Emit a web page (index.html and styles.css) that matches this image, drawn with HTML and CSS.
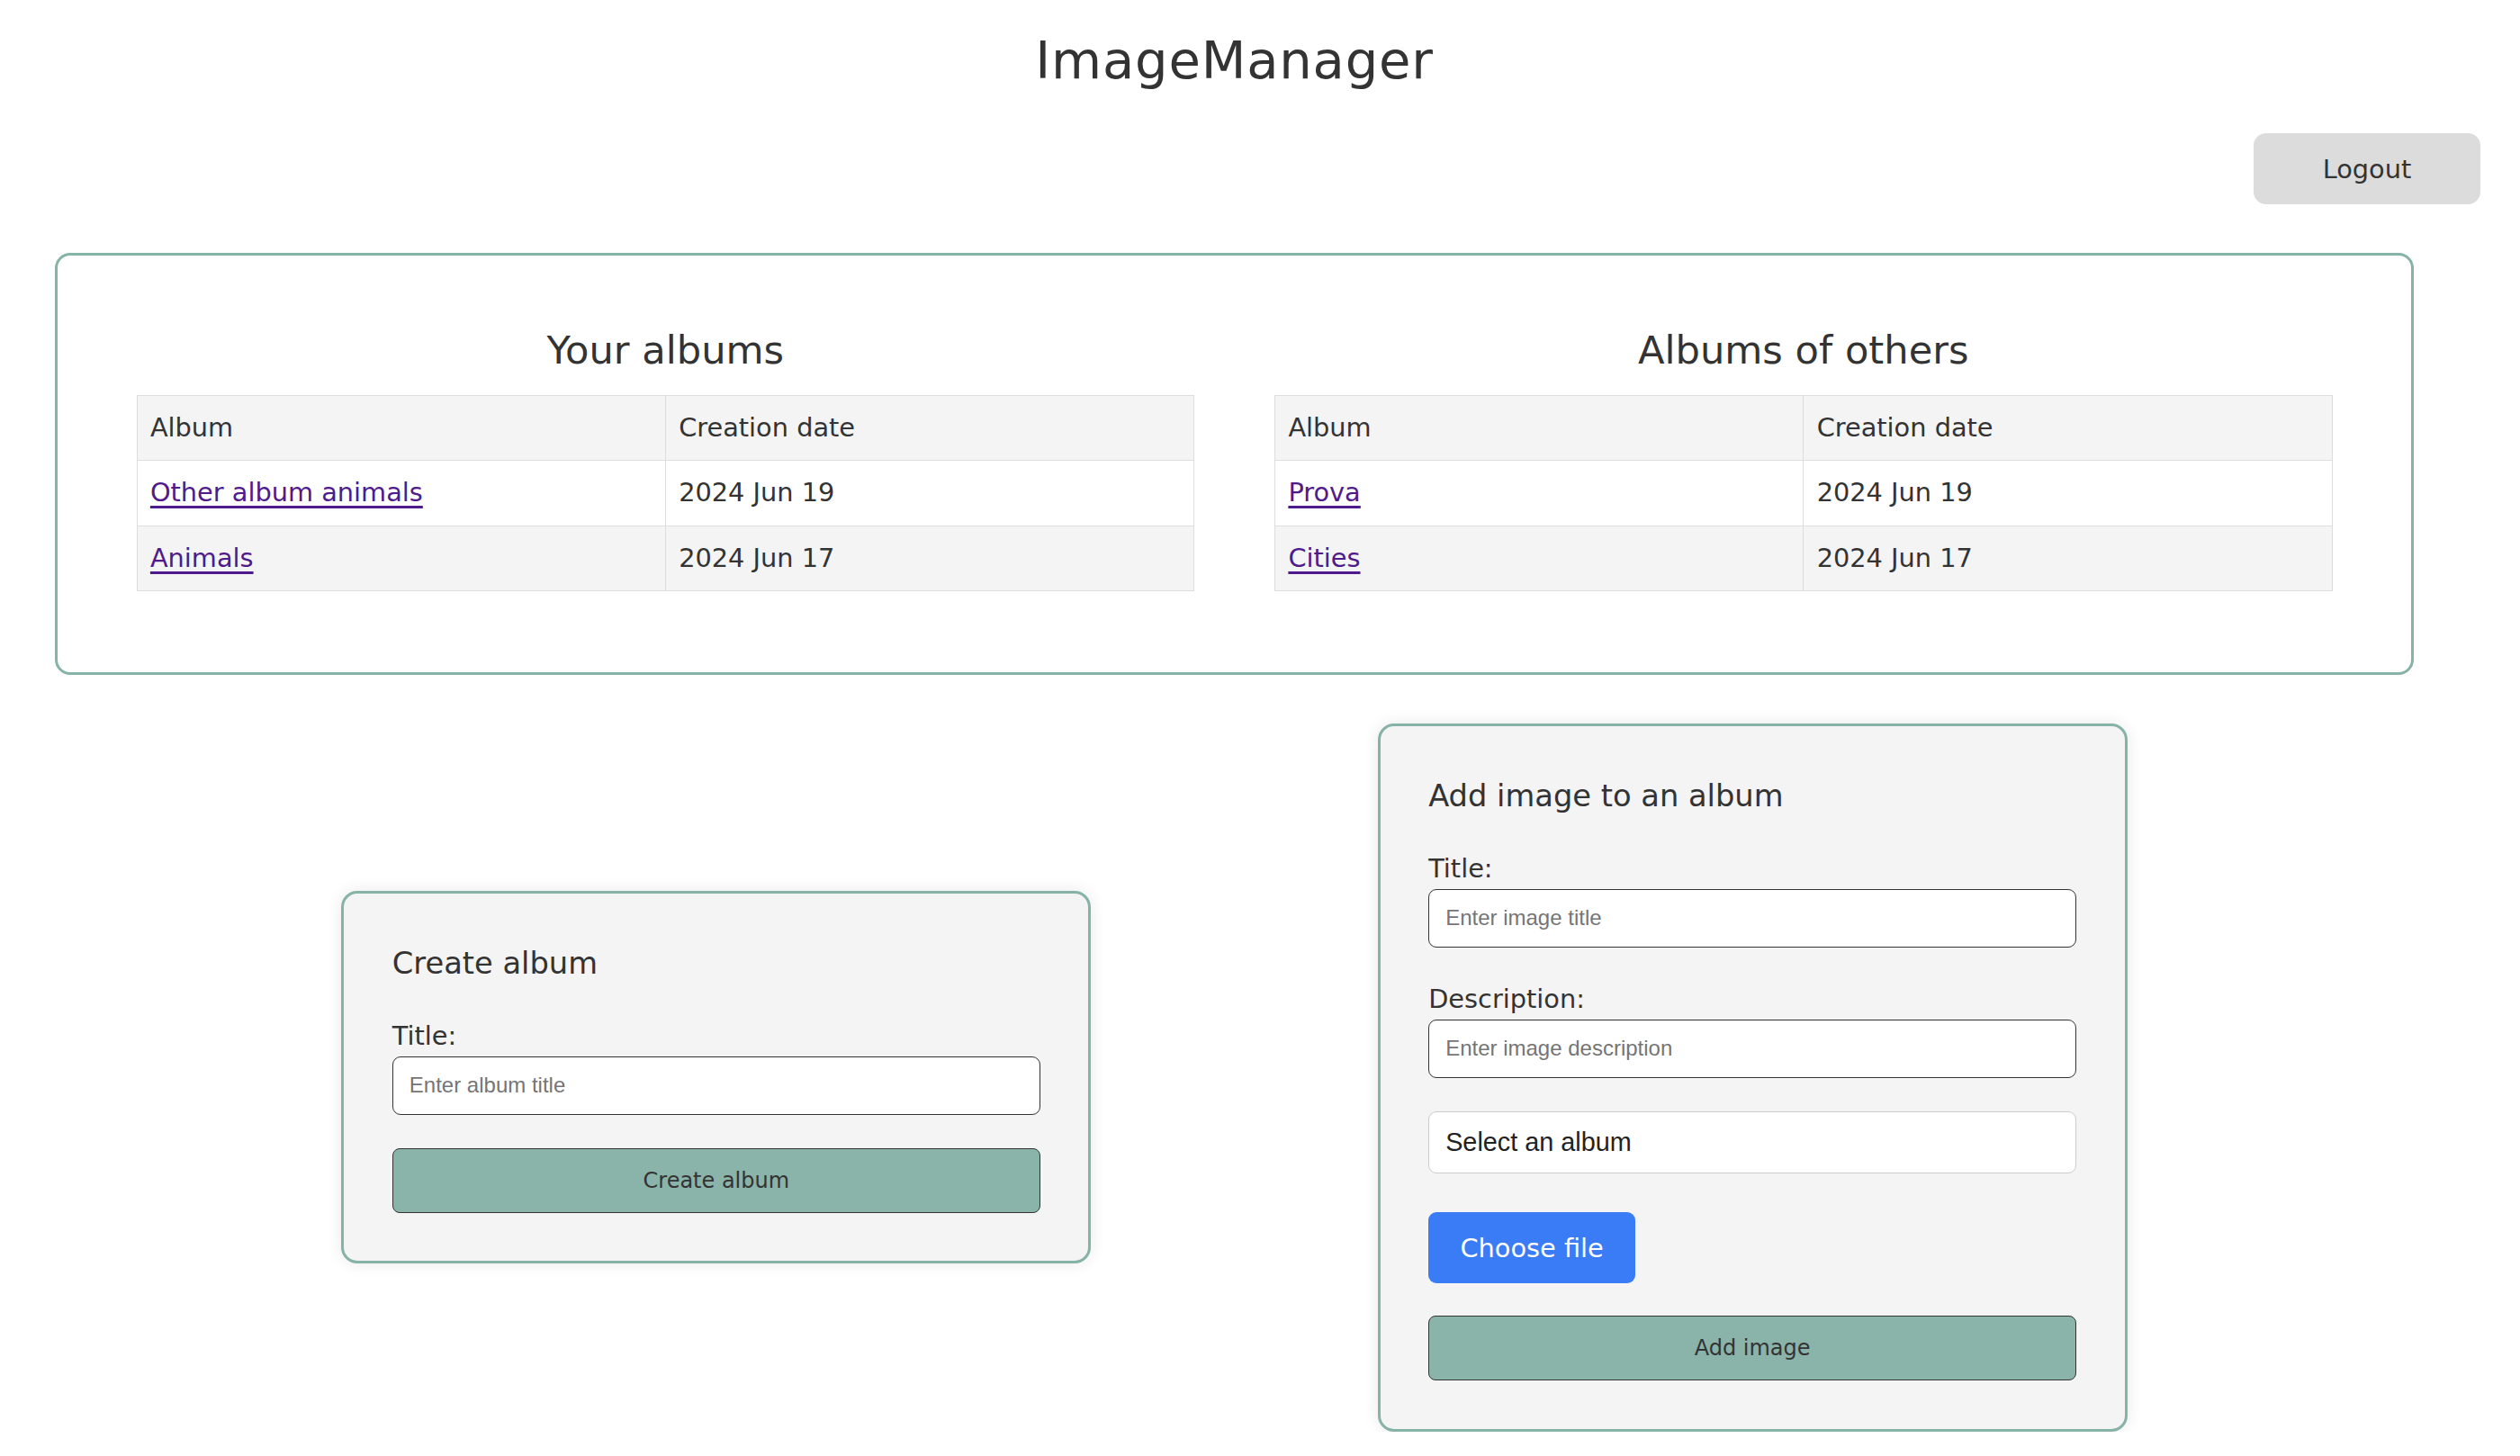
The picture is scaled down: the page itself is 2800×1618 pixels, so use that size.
FILE: index.html
```html
<!DOCTYPE html>
<html lang="en">
<head>
<meta charset="utf-8">
<title>ImageManager</title>
<link rel="stylesheet" href="styles.css">
</head>
<body>
<header class="site-header">
  <h1 class="site-title">ImageManager</h1>
</header>
<div class="toolbar">
  <button class="logout-btn" type="button">Logout</button>
</div>
<main>
  <section class="albums-panel">
    <div class="album-list">
      <h2 class="album-list-title">Your albums</h2>
      <table class="album-table">
        <thead>
          <tr><th>Album</th><th>Creation date</th></tr>
        </thead>
        <tbody>
          <tr><td><a href="#">Other album animals</a></td><td>2024 Jun 19</td></tr>
          <tr><td><a href="#">Animals</a></td><td>2024 Jun 17</td></tr>
        </tbody>
      </table>
    </div>
    <div class="album-list">
      <h2 class="album-list-title">Albums of others</h2>
      <table class="album-table">
        <thead>
          <tr><th>Album</th><th>Creation date</th></tr>
        </thead>
        <tbody>
          <tr><td><a href="#">Prova</a></td><td>2024 Jun 19</td></tr>
          <tr><td><a href="#">Cities</a></td><td>2024 Jun 17</td></tr>
        </tbody>
      </table>
    </div>
  </section>

  <section class="forms-row">
    <form class="card">
      <h3 class="card-title">Create album</h3>
      <label class="field-label" for="album-title">Title:</label>
      <input class="text-input" id="album-title" type="text" placeholder="Enter album title">
      <button class="submit-btn submit-btn--create" type="button">Create album</button>
    </form>

    <form class="card">
      <h3 class="card-title">Add image to an album</h3>
      <label class="field-label" for="image-title">Title:</label>
      <input class="text-input" id="image-title" type="text" placeholder="Enter image title">
      <label class="field-label field-label--spaced" for="image-desc">Description:</label>
      <input class="text-input" id="image-desc" type="text" placeholder="Enter image description">
      <select class="album-select">
        <option>Select an album</option>
      </select>
      <label class="file-btn" for="image-file">Choose file</label>
      <input class="file-input" id="image-file" type="file">
      <button class="submit-btn submit-btn--add" type="button">Add image</button>
    </form>
  </section>
</main>
</body>
</html>
```

FILE: styles.css
```css
* {
  box-sizing: border-box;
}

html {
  overflow: hidden;
}

body {
  margin: 0;
  background: #ffffff;
  color: #333333;
  font-family: "DejaVu Sans", "Noto Sans", sans-serif;
  font-size: 28.8px;
}

.site-header {
  padding: 34px 118px 0 61px;
}

.site-title {
  margin: 0;
  text-align: center;
  font-size: 57.6px;
  font-weight: 400;
  letter-spacing: 0.8px;
  line-height: normal;
  color: #333333;
}

.toolbar {
  display: flex;
  justify-content: flex-end;
  margin-top: 47px;
  padding-right: 44px;
}

.logout-btn {
  width: 252px;
  height: 79px;
  border: none;
  border-radius: 14px;
  background: #dcdcdc;
  color: #333333;
  font-family: inherit;
  font-size: 28.8px;
  cursor: pointer;
}

.albums-panel {
  display: grid;
  grid-template-columns: 1fr 1fr;
  column-gap: 89px;
  width: 2621px;
  margin: 54px 0 0 61px;
  padding: 79.5px 87.5px 89.5px;
  border: 3.5px solid #86b2a7;
  border-radius: 17px;
}

.album-list-title {
  margin: 0 0 25px;
  text-align: center;
  font-size: 43.2px;
  font-weight: 400;
  line-height: normal;
}

.album-table {
  width: 100%;
  table-layout: fixed;
  border-collapse: collapse;
  border: 1px solid #dddddd;
}

.album-table th,
.album-table td {
  padding: 19px 14.4px;
  border: 1px solid #dddddd;
  text-align: left;
  font-weight: 400;
  line-height: 33.5px;
}

.album-table thead tr {
  background: #f4f4f4;
}

.album-table tbody tr:nth-child(even) {
  background: #f4f4f4;
}

.album-table a {
  color: #4f1a8b;
  text-decoration-thickness: 2.5px;
  text-underline-offset: 5px;
}

.forms-row {
  display: flex;
  justify-content: space-evenly;
  align-items: center;
  width: 2621px;
  margin: 54px 0 0 61px;
}

.card {
  display: flex;
  flex-direction: column;
  width: 833px;
  padding: 53.5px;
  border: 3.5px solid #86b2a7;
  border-radius: 18px;
  background: #f4f4f4;
  box-shadow: 0 0 18px rgba(0, 0, 0, 0.09);
}

.card-title {
  margin: 5px 0 0;
  font-size: 33.7px;
  font-weight: 400;
  line-height: normal;
}

.field-label {
  display: block;
  margin: 44.5px 0 5.5px;
  line-height: 33.5px;
}

.field-label--spaced {
  margin-top: 41px;
}

.text-input {
  width: 100%;
  height: 65px;
  padding: 0 18px;
  border: 1.5px solid #333333;
  border-radius: 9px;
  background: #ffffff;
  color: #333333;
  font-family: "Liberation Sans", Arial, sans-serif;
  font-size: 24px;
}

.text-input::placeholder {
  color: #757575;
}

.album-select {
  appearance: none;
  width: 100%;
  height: 69px;
  margin-top: 37px;
  padding: 0 18px;
  border: 1.5px solid #cccccc;
  border-radius: 9px;
  background: #ffffff;
  color: #222222;
  font-family: "Liberation Sans", Arial, sans-serif;
  font-size: 28.8px;
}

.file-btn {
  display: flex;
  align-items: center;
  justify-content: center;
  align-self: flex-start;
  width: 230px;
  height: 79px;
  margin-top: 43.5px;
  border-radius: 9px;
  background: #3a7bf6;
  color: #ffffff;
  font-size: 28.8px;
  cursor: pointer;
}

.file-input {
  display: none;
}

.submit-btn {
  width: 100%;
  height: 72px;
  border: 1.5px solid #333333;
  border-radius: 8px;
  background: #8ab3aa;
  color: #333333;
  font-family: inherit;
  font-size: 24px;
  cursor: pointer;
}

.submit-btn--create {
  margin-top: 37px;
}

.submit-btn--add {
  margin-top: 36.3px;
}
```
